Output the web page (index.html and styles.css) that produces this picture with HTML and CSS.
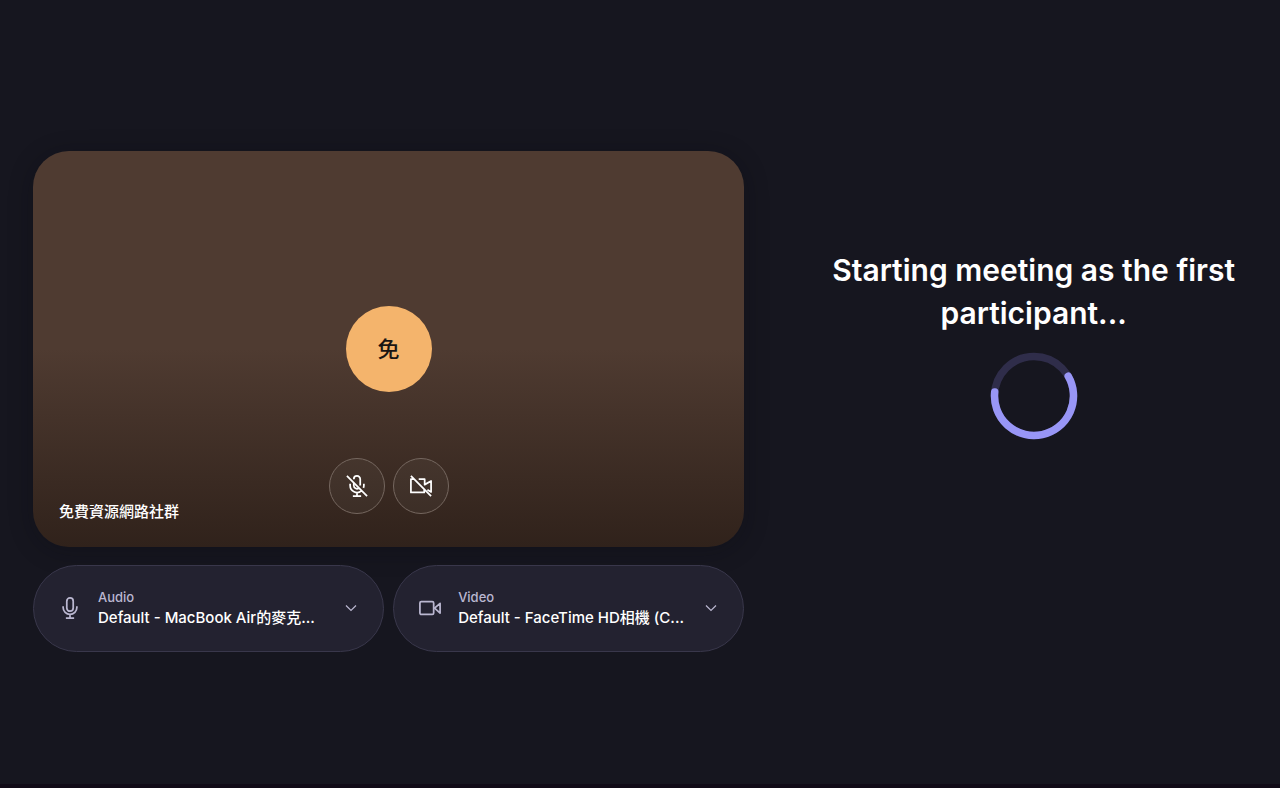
FILE: index.html
```html
<!DOCTYPE html>
<html lang="en">
<head>
  <meta charset="UTF-8" />
  <meta name="viewport" content="width=device-width, initial-scale=1" />
  <title>Starting meeting</title>
  <link rel="stylesheet" href="styles.css">
</head>
<body>
  <main class="lobby">
    <section class="preview">
      <div class="avatar">免</div>
      <div class="preview-bar">
        <span class="user-name">免費資源網路社群</span>
        <div class="toggles">
          <button class="toggle" type="button" aria-label="Turn microphone on">
            <svg class="icon" viewBox="0 0 24 24">
              <path d="M8.5 4.5a3.5 3.5 0 0 1 7 0v7M8.5 8.5v3a3.5 3.5 0 0 0 5.4 2.9" />
              <path d="M4.5 9.500v2a7.500 7.500 0 0 0 12.300 5.800M19.500 9.500v2c0 .9-.2 1.700-.5 2.500M12 19v4M7.500 23h9M1 1l22 22" />
            </svg>
          </button>
          <button class="toggle" type="button" aria-label="Turn camera on">
            <svg class="icon" viewBox="0 0 24 24">
              <path d="M4.500 4.500H1v14.500h14.500v-3M9.500 4.500h6.500v6l7-4v12l-4-2.500M1 1l22 22" />
            </svg>
          </button>
        </div>
      </div>
    </section>

    <section class="status">
      <h1>Starting meeting as the first participant...</h1>
      <svg class="spinner" viewBox="0 0 88 88" role="img" aria-label="Loading">
        <circle class="track" cx="44" cy="44" r="39.500" />
        <path class="arc" d="M78.200 24.200A39.500 39.500 0 1 1 4.700 40" />
      </svg>
    </section>

    <section class="devices">
      <div class="device">
        <svg class="icon" viewBox="0 0 24 24">
          <rect x="8.500" y="1" width="7" height="14.500" rx="3.500" />
          <path d="M4.500 10v1.500a7.500 7.500 0 0 0 15 0V10M12 19v4M7.500 23h9" />
        </svg>
        <div class="device-text">
          <label for="audio">Audio</label>
          <select id="audio">
            <option>Default - MacBook Air的麥克...</option>
          </select>
        </div>
        <svg class="chevron" viewBox="0 0 12 12"><path d="M1 3.500l5 5 5-5" /></svg>
      </div>
      <div class="device">
        <svg class="icon" viewBox="0 0 24 24">
          <rect x="1" y="5" width="15" height="14" rx="1.500" />
          <path d="M23 7v10.500L17 12.200z" />
        </svg>
        <div class="device-text">
          <label for="video">Video</label>
          <select id="video">
            <option>Default - FaceTime HD相機 (C...</option>
          </select>
        </div>
        <svg class="chevron" viewBox="0 0 12 12"><path d="M1 3.500l5 5 5-5" /></svg>
      </div>
    </section>
  </main>
</body>
</html>
```

FILE: styles.css
```css
* {
  box-sizing: border-box;
}

body {
  margin: 0;
  min-height: 100vh;
  display: flex;
  background-color: #16161f;
  border-bottom: 4px solid #110b17;
  color: #fff;
  font-family: Inter, "Noto Sans CJK TC", sans-serif;
}

.lobby {
  flex: 1;
  display: grid;
  grid-template-columns: 5fr 3fr;
  align-content: center;
  gap: 18px 76px;
  padding: 19px 33px 0;
}

.preview {
  aspect-ratio: 9 / 5;
  display: grid;
  grid-template-rows: 1fr auto 1fr;
  justify-items: center;
  border-radius: 36px;
  background: linear-gradient(#4f3b31 50%, #30221b);
  box-shadow: 0 4px 24px rgba(10, 10, 18, 0.3);
}

.avatar {
  grid-row: 2;
  width: 86px;
  height: 86px;
  display: flex;
  align-items: center;
  justify-content: center;
  border-radius: 50%;
  background-color: #f4b46c;
  color: #1a1613;
  font-size: 22px;
  font-weight: 500;
  line-height: 24px;
}

.preview-bar {
  grid-row: 3;
  width: 100%;
  align-self: end;
  display: grid;
  grid-template-columns: 1fr auto 1fr;
  align-items: end;
  padding: 0 26px 24px;
}

.user-name {
  font-size: 15px;
  font-weight: 500;
  line-height: 22px;
}

.toggles {
  display: flex;
  gap: 8px;
  padding-bottom: 9px;
}

.toggle {
  width: 56px;
  height: 56px;
  padding: 0;
  display: flex;
  align-items: center;
  justify-content: center;
  border: 1px solid #75675f;
  border-radius: 50%;
  background-color: rgba(255, 255, 255, 0.04);
  color: #fff;
  cursor: pointer;
}

.icon {
  width: 22px;
  height: 22px;
  flex: none;
  overflow: visible;
  fill: none;
  stroke: currentColor;
  stroke-width: 1.9;
  stroke-linejoin: round;
}

.status {
  display: flex;
  flex-direction: column;
  align-items: center;
  justify-content: center;
  gap: 17px;
  padding-bottom: 10px;
}

.status h1 {
  margin: 0;
  font-size: 30px;
  font-weight: 600;
  line-height: 43px;
  text-align: center;
}

.spinner {
  width: 88px;
  height: 88px;
  fill: none;
  stroke-width: 7.5;
}

.track {
  stroke: #2f2d4a;
}

.arc {
  stroke: #9896f6;
  stroke-linecap: round;
}

.devices {
  display: grid;
  grid-template-columns: 1fr 1fr;
  gap: 9px;
}

.device {
  height: 87px;
  display: flex;
  align-items: center;
  padding: 0 26px 0 25px;
  border: 1px solid #39374b;
  border-radius: 44px;
  background-color: #232230;
  color: #bab7d0;
}

.device-text {
  flex: 1;
  min-width: 0;
  display: flex;
  flex-direction: column;
  padding: 0 12px 0 17px;
}

.device-text label {
  font-size: 13px;
  font-weight: 500;
  line-height: 18px;
}

.device-text select {
  width: 100%;
  height: 22px;
  padding: 0;
  border: 0;
  appearance: none;
  background: none;
  color: #fff;
  font-family: inherit;
  font-size: 15px;
  font-weight: 500;
  text-overflow: ellipsis;
  cursor: pointer;
}

.chevron {
  width: 12px;
  height: 12px;
  flex: none;
  fill: none;
  stroke: currentColor;
  stroke-width: 1.2;
}

@media (max-width: 800px) {
  .lobby {
    grid-template-columns: 1fr;
  }
}
```
